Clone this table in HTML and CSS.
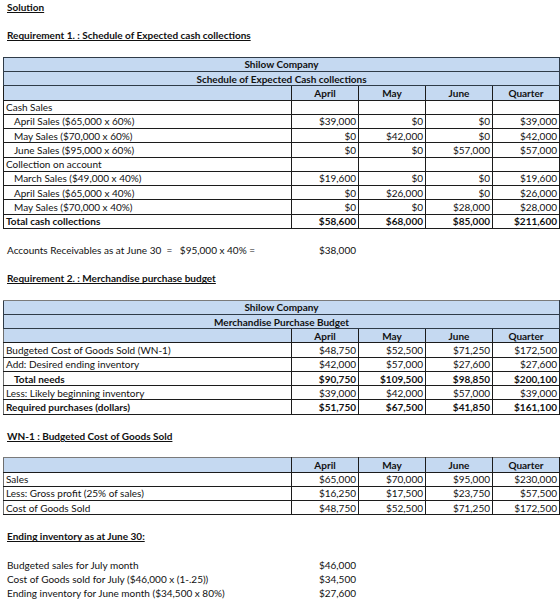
FILE: index.html
```html
<!DOCTYPE html>
<html>
<head>
<meta charset="utf-8">
<link rel="stylesheet" href="styles.css">
</head>
<body>
<div class="sheet">
  <div class="line"><span class="h">Solution</span></div>
  <div class="line"></div>
  <div class="line"><span class="h">Requirement 1. : Schedule of Expected cash collections</span></div>
  <div class="line"></div>

  <table class="grid dark">
    <colgroup><col class="c-label"><col class="c-num"><col class="c-num"><col class="c-num"><col class="c-num"></colgroup>
    <tr class="title"><td colspan="5">Shilow Company</td></tr>
    <tr class="title"><td colspan="5">Schedule of Expected Cash collections</td></tr>
    <tr class="head"><td></td><td>April</td><td>May</td><td>June</td><td>Quarter</td></tr>
    <tr><td class="l">Cash Sales</td><td></td><td></td><td></td><td></td></tr>
    <tr><td class="l in">April Sales ($65,000 x 60%)</td><td>$39,000</td><td>$0</td><td>$0</td><td>$39,000</td></tr>
    <tr><td class="l in">May Sales ($70,000 x 60%)</td><td>$0</td><td>$42,000</td><td>$0</td><td>$42,000</td></tr>
    <tr><td class="l in">June Sales ($95,000 x 60%)</td><td>$0</td><td>$0</td><td>$57,000</td><td>$57,000</td></tr>
    <tr><td class="l">Collection on account</td><td></td><td></td><td></td><td></td></tr>
    <tr><td class="l in">March Sales ($49,000 x 40%)</td><td>$19,600</td><td>$0</td><td>$0</td><td>$19,600</td></tr>
    <tr><td class="l in">April Sales ($65,000 x 40%)</td><td>$0</td><td>$26,000</td><td>$0</td><td>$26,000</td></tr>
    <tr><td class="l in">May Sales ($70,000 x 40%)</td><td>$0</td><td>$0</td><td>$28,000</td><td>$28,000</td></tr>
    <tr class="bold"><td class="l">Total cash collections</td><td>$58,600</td><td>$68,000</td><td>$85,000</td><td>$211,600</td></tr>
  </table>

  <div class="line"></div>
  <div class="line row"><span class="txt">Accounts Receivables as at June 30  =   $95,000 x 40% =</span><span class="num">$38,000</span></div>
  <div class="line"></div>
  <div class="line"><span class="h">Requirement 2. : Merchandise purchase budget</span></div>
  <div class="line"></div>

  <table class="grid soft">
    <colgroup><col class="c-label"><col class="c-num"><col class="c-num"><col class="c-num"><col class="c-num"></colgroup>
    <tr class="title"><td colspan="5">Shilow Company</td></tr>
    <tr class="title"><td colspan="5">Merchandise Purchase Budget</td></tr>
    <tr class="head"><td></td><td>April</td><td>May</td><td>June</td><td>Quarter</td></tr>
    <tr><td class="l">Budgeted Cost of Goods Sold (WN-1)</td><td>$48,750</td><td>$52,500</td><td>$71,250</td><td>$172,500</td></tr>
    <tr><td class="l">Add: Desired ending inventory</td><td>$42,000</td><td>$57,000</td><td>$27,600</td><td>$27,600</td></tr>
    <tr class="bold"><td class="l in">Total needs</td><td>$90,750</td><td>$109,500</td><td>$98,850</td><td>$200,100</td></tr>
    <tr><td class="l">Less: Likely beginning inventory</td><td>$39,000</td><td>$42,000</td><td>$57,000</td><td>$39,000</td></tr>
    <tr class="bold"><td class="l">Required purchases (dollars)</td><td>$51,750</td><td>$67,500</td><td>$41,850</td><td>$161,100</td></tr>
  </table>

  <div class="line"></div>
  <div class="line"><span class="h">WN-1 : Budgeted Cost of Goods Sold</span></div>
  <div class="line"></div>

  <table class="grid soft">
    <colgroup><col class="c-label"><col class="c-num"><col class="c-num"><col class="c-num"><col class="c-num"></colgroup>
    <tr class="head"><td></td><td>April</td><td>May</td><td>June</td><td>Quarter</td></tr>
    <tr><td class="l">Sales</td><td>$65,000</td><td>$70,000</td><td>$95,000</td><td>$230,000</td></tr>
    <tr><td class="l">Less: Gross profit (25% of sales)</td><td>$16,250</td><td>$17,500</td><td>$23,750</td><td>$57,500</td></tr>
    <tr><td class="l">Cost of Goods Sold</td><td>$48,750</td><td>$52,500</td><td>$71,250</td><td>$172,500</td></tr>
  </table>

  <div class="line"></div>
  <div class="line"><span class="h">Ending inventory as at June 30:</span></div>
  <div class="line"></div>
  <div class="line row"><span class="txt">Budgeted sales for July month</span><span class="num">$46,000</span></div>
  <div class="line row"><span class="txt">Cost of Goods sold for July ($46,000 x (1-.25))</span><span class="num">$34,500</span></div>
  <div class="line row"><span class="txt">Ending inventory for June month ($34,500 x 80%)</span><span class="num">$27,600</span></div>
</div>
</body>
</html>
```

FILE: styles.css
```css
html, body {
  margin: 0;
  padding: 0;
  background: #ffffff;
}

body {
  font-family: Lato, "Liberation Sans", sans-serif;
  font-size: 10px;
  color: #111111;
}

.sheet {
  width: 560px;
  display: flex;
  flex-direction: column;
}

.line {
  height: 14.2px;
  line-height: 15px;
  padding-left: 7px;
  white-space: pre;
  flex: none;
}

.h {
  font-weight: bold;
  text-decoration: underline;
}

.line.row {
  display: grid;
  grid-template-columns: 284px 67px;
  padding-left: 7px;
}

.line.row .num {
  text-align: right;
  padding-right: 2px;
}

table.grid {
  border-collapse: collapse;
  table-layout: fixed;
  width: 557px;
  margin-left: 3px;
  flex: none;
}

col.c-label {
  width: 288px;
}

col.c-num {
  width: 67px;
}

table.grid tr {
  height: 14.25px;
}

table.grid td {
  border: 1px solid #1c1c1c;
  padding: 0 2px;
  line-height: 12px;
  text-align: right;
  white-space: nowrap;
  overflow: hidden;
}

table.grid td.l {
  text-align: left;
}

table.grid td.in {
  padding-left: 10px;
}

table.grid tr.title td,
table.grid tr.head td {
  background: #c5d9f1;
  font-weight: bold;
  text-align: center;
}

table.grid tr.title td {
  border-color: #2f3b48;
}

table.grid tr.bold td {
  font-weight: bold;
}

table.soft {
  border: 1px solid #6e6e6e;
}

table.soft tr:first-child td {
  border-top-color: #7a7a7a;
}

table.soft td:first-child {
  border-left-color: #6e6e6e;
}
```
